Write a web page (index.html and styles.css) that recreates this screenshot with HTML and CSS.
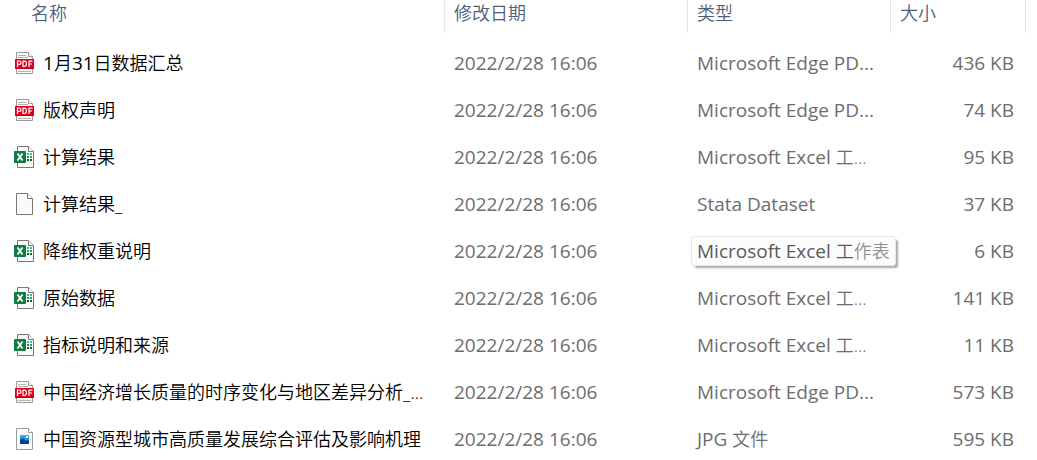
FILE: index.html
```html
<!DOCTYPE html>
<html lang="zh-CN">
<head>
<meta charset="utf-8">
<title>文件列表</title>
<link rel="stylesheet" href="styles.css">
</head>
<body>
<svg class="sprite" aria-hidden="true">
  <symbol id="pdf" viewBox="0 0 22 24">
    <path d="M3.5 1.5h12l4 4v17h-16z" fill="#fafafa" stroke="#9b9b9b"/>
    <path d="M15.5 1.5v4h4" fill="#fff" stroke="#9b9b9b"/>
    <path d="M5 4.500h8M5 6.500h10M5 20.500h13" stroke="#b5b5b5"/>
    <path d="M2 8h19v10H2z" fill="#e3001b"/>
    <path d="M2 17h19v1H2z" fill="#b80016"/>
    <path d="M4.500 16v-6h2q1.500 0 1.500 1.700t-1.500 1.700h-2M10 10.200v5.300h1.200q2.300 0 2.300-2.700t-2.300-2.600zM16 16v-5.800h3.500M16 13h3" fill="none" stroke="#fff" stroke-width="1.200"/>
  </symbol>
  <symbol id="excel" viewBox="0 0 22 24">
    <path d="M4.500 1.500h11l5 5v16h-16z" fill="#fafafa" stroke="#777"/>
    <path d="M15.500 1.500v5h5" fill="#fff" stroke="#777"/>
    <path d="M14 8h2v2h-2zM17 8h2v2h-2z" fill="#33c481"/>
    <path d="M14 11h2v2h-2zM17 11h2v2h-2z" fill="#21a366"/>
    <path d="M14 14h2v2h-2zM17 14h2v2h-2z" fill="#185c37"/>
    <rect x="1" y="6" width="12" height="12" rx="1" fill="#107c41"/>
    <path d="M4.500 8.500l5 7M9.500 8.500l-5 7" stroke="#fff" stroke-width="1.800"/>
  </symbol>
  <symbol id="blank" viewBox="0 0 22 24">
    <path d="M3.500 1.500h11l5 5v16h-16z" fill="#fafafa" stroke="#777"/>
    <path d="M14.500 1.500v5h5" fill="#fff" stroke="#777"/>
  </symbol>
  <symbol id="image" viewBox="0 0 22 24">
    <linearGradient id="sky" x2="0" y2="1"><stop stop-color="#2fb4ee"/><stop offset="1" stop-color="#1570c8"/></linearGradient>
    <path d="M3.500 1.500h12l4 4v17h-16z" fill="#fafafa" stroke="#9b9b9b"/>
    <path d="M15.500 1.500v4h4" fill="#fff" stroke="#9b9b9b"/>
    <path d="M7 8h9v9H7z" fill="url(#sky)"/>
    <path d="M7 13l3-2 3 3 1-1 2 1v3H7z" fill="#123f8c"/>
    <path d="M13 9h2v2h-2z" fill="#fff"/>
  </symbol>
</svg>
<main class="files">
<table class="list">
  <colgroup><col><col class="col-date"><col class="col-type"><col class="col-size"></colgroup>
  <thead>
    <tr>
      <th scope="col"><button class="head head-name" type="button">名称</button></th>
      <th scope="col"><button class="head" type="button">修改日期</button></th>
      <th scope="col"><button class="head" type="button">类型</button></th>
      <th scope="col"><button class="head" type="button">大小</button></th>
    </tr>
  </thead>
  <tbody>
    <tr><td><div class="name"><svg class="icon"><use href="#pdf"/></svg><span><span class="digits">1</span><span class="zh">月</span><span class="digits">31</span><span class="zh">日数据汇总</span></span></div></td><td>2022/2/28 16:06</td><td>Microsoft Edge PD...</td><td class="size">436 KB</td></tr>
    <tr><td><div class="name"><svg class="icon"><use href="#pdf"/></svg><span class="zh">版权声明</span></div></td><td>2022/2/28 16:06</td><td>Microsoft Edge PD...</td><td class="size">74 KB</td></tr>
    <tr><td><div class="name"><svg class="icon"><use href="#excel"/></svg><span class="zh">计算结果</span></div></td><td>2022/2/28 16:06</td><td>Microsoft Excel <span class="zh">工...</span></td><td class="size">95 KB</td></tr>
    <tr><td><div class="name"><svg class="icon"><use href="#blank"/></svg><span class="zh">计算结果_</span></div></td><td>2022/2/28 16:06</td><td>Stata Dataset</td><td class="size">37 KB</td></tr>
    <tr><td><div class="name"><svg class="icon"><use href="#excel"/></svg><span class="zh">降维权重说明</span></div></td><td>2022/2/28 16:06</td><td><span class="tip">Microsoft Excel <span class="zh">工<span class="faded">作表</span></span></span></td><td class="size">6 KB</td></tr>
    <tr><td><div class="name"><svg class="icon"><use href="#excel"/></svg><span class="zh">原始数据</span></div></td><td>2022/2/28 16:06</td><td>Microsoft Excel <span class="zh">工...</span></td><td class="size">141 KB</td></tr>
    <tr><td><div class="name"><svg class="icon"><use href="#excel"/></svg><span class="zh">指标说明和来源</span></div></td><td>2022/2/28 16:06</td><td>Microsoft Excel <span class="zh">工...</span></td><td class="size">11 KB</td></tr>
    <tr><td><div class="name"><svg class="icon"><use href="#pdf"/></svg><span class="zh">中国经济增长质量的时序变化与地区差异分析_...</span></div></td><td>2022/2/28 16:06</td><td>Microsoft Edge PD...</td><td class="size">573 KB</td></tr>
    <tr><td><div class="name"><svg class="icon"><use href="#image"/></svg><span class="zh">中国资源型城市高质量发展综合评估及影响机理</span></div></td><td>2022/2/28 16:06</td><td>JPG <span class="zh">文件</span></td><td class="size">595 KB</td></tr>
  </tbody>
</table>
</main>
</body>
</html>
```
FILE: styles.css
```css
body {
  margin: 0;
  background: #fff;
  color: #6d6d6d;
  font: 400 19px/24px "Open Sans", "Noto Sans CJK SC", sans-serif;
}

.sprite {
  display: block;
  width: 0;
  height: 0;
}

.files {
  padding-right: 11px;
  overflow: hidden;
}

.list {
  width: 100%;
  table-layout: fixed;
  border-collapse: collapse;
}

.col-date { width: 243px; }
.col-type { width: 203px; }
.col-size { width: 135px; }

th {
  height: 39px;
  padding: 0;
  vertical-align: top;
}

.head {
  display: block;
  box-sizing: border-box;
  width: 100%;
  height: 33px;
  padding: 0 9px 7px;
  border: 0;
  border-right: 1px solid #e5e5e5;
  background: none;
  color: #4c607a;
  font: 350 18px/24px "Open Sans", "Noto Sans CJK SC", sans-serif;
  text-align: left;
}

.head-name { padding-left: 31px; }

td {
  height: 47px;
  padding: 0 0 0 9px;
  white-space: nowrap;
}

td:first-child { padding-left: 13px; }

.name {
  display: flex;
  align-items: center;
  gap: 8px;
  color: #000;
}

.icon {
  flex: none;
  width: 22px;
  height: 24px;
}

.zh {
  font-size: 18px;
  font-weight: 350;
}

.digits { font-size: 19px; }

.size {
  padding-right: 12px;
  text-align: right;
}

.tip {
  display: inline-block;
  margin-left: -6px;
  padding: 2px 5px;
  border: 1px solid #e8e8e8;
  border-radius: 3px;
  background: #fcfcfc;
  box-shadow: 3px 3px 2px -1px #aaa;
  color: #5a5a5a;
}

.faded { color: #8f8f8f; }
```
